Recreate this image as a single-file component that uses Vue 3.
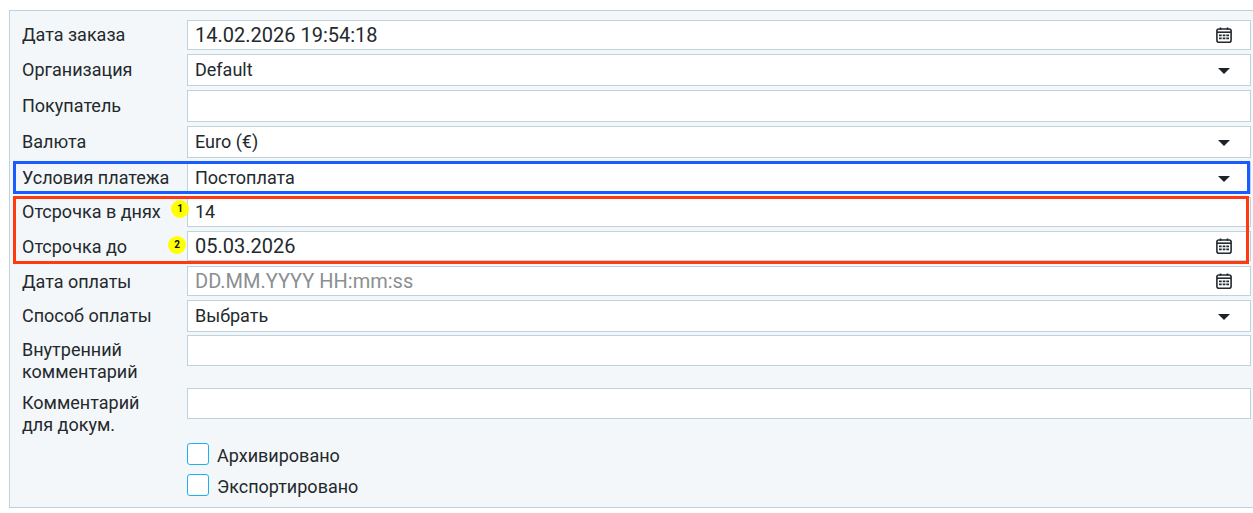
<template>
  <div class="page">
    <form class="panel" @submit.prevent>
      <div v-for="row in rows" :key="row.label" class="row" :class="row.cls">
        <label class="label" v-html="row.label"></label>
        <div class="field" :class="{ big: row.big, hint: row.hint }">
          <span class="value">{{ row.value }}</span>
          <svg v-if="row.icon === 'date'" class="cal" viewBox="0 0 16 16" width="16" height="16">
            <path d="M4.5 0.4v2.4M11.5 0.4v2.4" stroke="#23292d" stroke-width="1.7" fill="none" />
            <rect x="0.9" y="2" width="14.2" height="13.2" rx="2" fill="none" stroke="#23292d" stroke-width="1.6" />
            <path d="M1 5.2h14" stroke="#23292d" stroke-width="1.6" />
            <path d="M3 7.4h2.7v1.8H3zM6.7 7.4h2.7v1.8H6.7zM10.3 7.4H13v1.8h-2.7zM3 10.5h2.7v1.8H3zM6.7 10.5h2.7v1.8H6.7zM10.3 10.5H13v1.8h-2.7z" fill="#23292d" />
          </svg>
          <svg v-else-if="row.icon === 'select'" class="arrow" viewBox="0 0 12 6" width="12" height="6">
            <path d="M0 0h12L6 6z" fill="#1d2226" />
          </svg>
        </div>
      </div>

      <div class="checks">
        <label v-for="c in checks" :key="c" class="check">
          <span class="box"></span>
          <span class="check-text">{{ c }}</span>
        </label>
      </div>

      <div class="mark mark-blue"></div>
      <div class="mark mark-red"></div>
      <span class="badge badge-1">1</span>
      <span class="badge badge-2">2</span>
    </form>
  </div>
</template>

<script setup>
const rows = [
  { label: 'Дата заказа', value: '14.02.2026 19:54:18', icon: 'date', big: true, cls: 'h30 up' },
  { label: 'Организация', value: 'Default', icon: 'select' },
  { label: 'Покупатель', value: '' },
  { label: 'Валюта', value: 'Euro (€)', icon: 'select' },
  { label: 'Условия платежа', value: 'Постоплата', icon: 'select', cls: 'tight' },
  { label: 'Отсрочка в днях', value: '14', cls: 'h30 up' },
  { label: 'Отсрочка до', value: '05.03.2026', icon: 'date', big: true, cls: 'h30 wide' },
  { label: 'Дата оплаты', value: 'DD.MM.YYYY HH:mm:ss', icon: 'date', big: true, hint: true, cls: 'h30' },
  { label: 'Способ оплаты', value: 'Выбрать', icon: 'select', cls: 'tight' },
  { label: 'Внутренний<br>комментарий', value: '', cls: 'tall up' },
  { label: 'Комментарий<br>для докум.', value: '', cls: 'tall up' }
]

const checks = ['Архивировано', 'Экспортировано']
</script>

<style scoped>
.page {
  padding: 10px 0 5px 9px;
  font-family: Roboto, "Noto Sans", sans-serif;
  color: #23292d;
}

.panel {
  position: relative;
  height: 498px;
  box-sizing: border-box;
  padding: 9px 2px 0 12px;
  background: #f4f7f9;
  border: 1px solid #bdd4df;
  border-right: 0;
}

.row {
  display: flex;
  align-items: flex-start;
  height: 32px;
  margin-bottom: 4px;
}

.row.h30 {
  height: 30px;
}

.row.tight {
  margin-bottom: 3px;
}

.row.wide {
  margin-bottom: 5px;
}

.row.tall {
  height: 31px;
  margin-bottom: 22px;
}

.label {
  flex: 0 0 165px;
  font-size: 18px;
  line-height: 22px;
  padding-top: 5px;
}

.row.up .label {
  padding-top: 4px;
}

.field {
  flex: 1;
  display: flex;
  align-items: center;
  justify-content: space-between;
  box-sizing: border-box;
  height: 100%;
  padding: 0 18px 2px 7px;
  background: #fff;
  border: 1px solid #bdd4df;
  font-size: 18px;
}

.field.big {
  padding-bottom: 0;
  font-size: 20px;
}

.field.hint .value {
  color: #8b8f92;
}

.arrow {
  margin: 4px 2px 0 0;
}

.checks {
  margin-top: 24px;
  padding-left: 165px;
  display: flex;
  flex-direction: column;
  gap: 9px;
}

.check {
  display: flex;
  align-items: flex-start;
  gap: 8px;
  height: 22px;
  font-size: 18px;
  line-height: 22px;
}

.check-text {
  padding-top: 2px;
}

.box {
  box-sizing: border-box;
  width: 22px;
  height: 22px;
  background: #fff;
  border: 1px solid #1fb0f0;
  border-radius: 3px;
}

.mark {
  position: absolute;
  box-sizing: border-box;
  left: 3px;
  border-style: solid;
  border-width: 3px;
}

.mark-blue {
  top: 150px;
  width: 1237px;
  height: 33px;
  border-color: #1a5cff;
}

.mark-red {
  top: 185px;
  width: 1236px;
  height: 68px;
  border-color: #ff3a10;
}

.badge {
  position: absolute;
  width: 18px;
  height: 18px;
  border-radius: 50%;
  background: #ffff00;
  color: #111;
  font-size: 10px;
  font-weight: 700;
  line-height: 17px;
  text-align: center;
}

.badge-1 {
  left: 161px;
  top: 189px;
}

.badge-2 {
  left: 158px;
  top: 225px;
}
</style>
